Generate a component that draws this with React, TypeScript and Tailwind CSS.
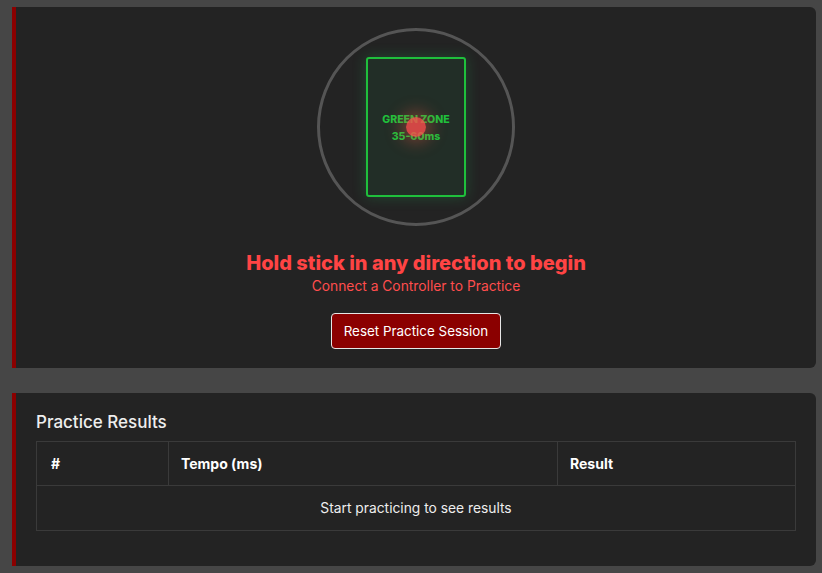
import React from "react";

export default function App() {
  const font = { fontFamily: "Inter, 'Noto Sans', sans-serif" };
  return (
    <div className="min-h-[573px] bg-[#464646] pl-[12px] pr-[6px] pt-[7px] pb-[7px] flex flex-col gap-[25px]" style={font}>
      <div className="bg-[#232323] border-l-4 border-[#8b0000] rounded-r-[6px] h-[361px] flex flex-col items-center pt-[21px]">
        <div className="relative w-[198px] h-[198px] rounded-full border-[3px] border-[#555555] flex items-center justify-center">
          <div className="w-[100px] h-[140px] border-2 border-[#1fc03c] rounded-[3px] bg-[rgba(34,197,94,0.07)] shadow-[0_0_14px_rgba(34,197,94,0.25)] flex flex-col items-center justify-center pt-[2px]">
            <div className="text-[#1fc03c] text-[10.5px] font-extrabold leading-[17px] text-center">GREEN ZONE</div>
            <div className="text-[#1fc03c] text-[10.5px] font-extrabold leading-[17px] text-center">35-60ms</div>
          </div>
          <div className="absolute left-1/2 top-1/2 -translate-x-1/2 -translate-y-1/2 w-[20px] h-[20px] rounded-full bg-[rgba(255,77,77,0.8)] shadow-[0_0_16px_6px_rgba(255,90,70,0.35)]" />
        </div>
        <div className="mt-[23px] text-[#ff4444] text-[20px] font-extrabold leading-[28px]">Hold stick in any direction to begin</div>
        <div className="mt-[0px] text-[#ff4d4d] text-[13.8px] leading-[18px]">Connect a Controller to Practice</div>
        <button className="mt-[18px] w-[170px] h-[36px] bg-[#8b0000] border border-[#e6e6e6] rounded-[4px] text-white text-[13.4px]">Reset Practice Session</button>
      </div>
      <div className="bg-[#232323] border-l-4 border-[#8b0000] rounded-r-[6px] h-[173px] pl-[20px] pr-[20px] pt-[19px]">
        <div className="text-[#eeeeee] text-[17px] leading-[20px] font-medium">Practice Results</div>
        <table className="mt-[9px] w-full border-collapse text-[14px]">
          <thead>
            <tr className="h-[44px]">
              <th className="w-[132px] border border-[#3a3a3a] text-left pl-[14px] font-bold text-white">#</th>
              <th className="w-[389px] border border-[#3a3a3a] text-left pl-[12px] font-bold text-white">Tempo (ms)</th>
              <th className="border border-[#3a3a3a] text-left pl-[12px] font-bold text-white">Result</th>
            </tr>
          </thead>
          <tbody>
            <tr className="h-[45px]">
              <td colSpan={3} className="border border-[#3a3a3a] text-center text-[#eeeeee] text-[13.8px]">Start practicing to see results</td>
            </tr>
          </tbody>
        </table>
      </div>
    </div>
  );
}
